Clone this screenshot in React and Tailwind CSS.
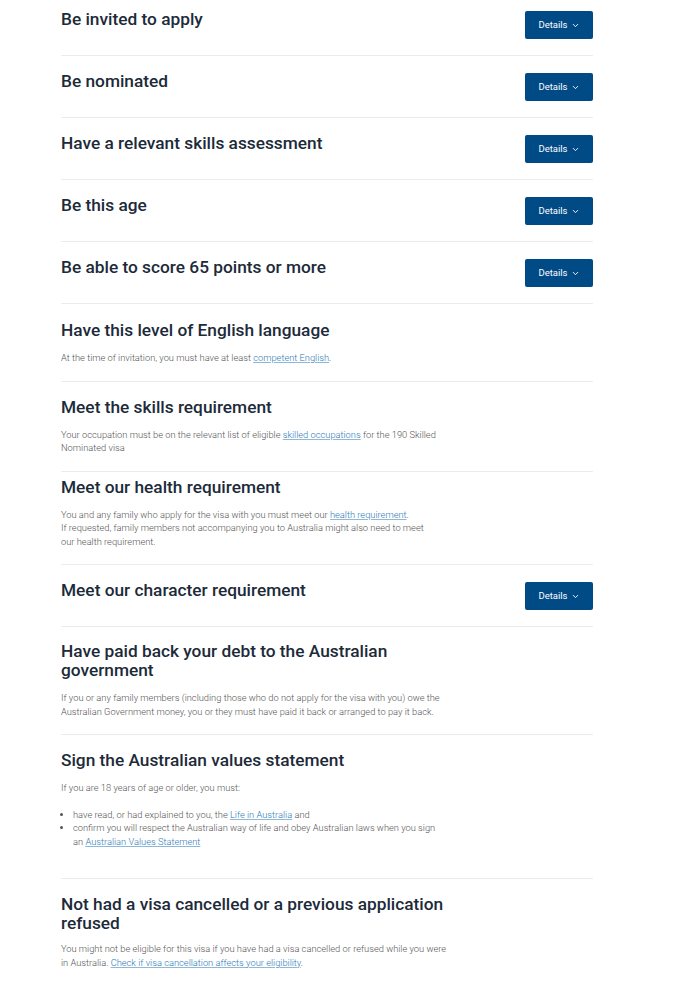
import { ChevronDown } from 'lucide-react'

const linkCls = 'text-[#2b7ab8] underline decoration-[#8db8d9] underline-offset-1'

function DetailsButton() {
    return (
        <button className="mt-px flex h-[28px] w-[68px] shrink-0 items-center justify-center gap-[3px] rounded-[2px] bg-[#004a86] text-[9.5px] font-normal text-white">
            Details
            <ChevronDown size={9} strokeWidth={2.5} />
        </button>
    )
}

function Row({ title, children, button, className = 'pt-4', textWidth = 'w-[380px]' }) {
    return (
        <div className={`flex items-start justify-between border-b border-[#ececec] pb-4 ${className}`}>
            <div className="w-[400px]">
                <h2 className="text-[17.3px] font-medium leading-[19px] text-[#1c2a39]">
                    {title}
                </h2>
                {children && (
                    <div className={`mt-[11px] text-[9.3px] font-light leading-[13.5px] text-[#555] ${textWidth}`}>
                        {children}
                    </div>
                )}
            </div>
            {button && <DetailsButton />}
        </div>
    )
}

export default function App() {
    return (
        <div className="min-h-[982px] bg-white font-['Roboto',sans-serif]">
            <div className="ml-[61px] w-[532px]">
                <Row title="Be invited to apply" button className="pt-[10px]" />
                <Row title="Be nominated" button />
                <Row title="Have a relevant skills assessment" button />
                <Row title="Be this age" button />
                <Row title="Be able to score 65 points or more" button />
                <Row title="Have this level of English language" className="pt-[17px]">
                    <p>
                        At the time of invitation, you must have at least{' '}
                        <a className={linkCls}>competent English</a>.
                    </p>
                </Row>
                <Row title="Meet the skills requirement">
                    <p>
                        Your occupation must be on the relevant list of eligible{' '}
                        <a className={linkCls}>skilled occupations</a> for the 190
                        Skilled Nominated visa
                    </p>
                </Row>
                <Row title="Meet our health requirement" className="pt-[6px]" textWidth="w-[368px]">
                    <p>
                        You and any family who apply for the visa with you must meet
                        our <a className={linkCls}>health requirement</a>.
                    </p>
                    <p>
                        If requested, family members not accompanying you to
                        Australia might also need to meet our health requirement.
                    </p>
                </Row>
                <Row title="Meet our character requirement" button />
                <Row title="Have paid back your debt to the Australian government" className="pt-[15px]">
                    <p>
                        If you or any family members (including those who do not apply
                        for the visa with you) owe the Australian Government money, you
                        or they must have paid it back or arranged to pay it back.
                    </p>
                </Row>
                <Row title="Sign the Australian values statement">
                    <p>If you are 18 years of age or older, you must:</p>
                    <ul className="mt-[13px] mb-[14px] list-disc pl-[12px]">
                        <li>
                            have read, or had explained to you, the{' '}
                            <a className={linkCls}>Life in Australia</a> and
                        </li>
                        <li>
                            confirm you will respect the Australian way of life and obey
                            Australian laws when you sign an{' '}
                            <a className={linkCls}>Australian Values Statement</a>
                        </li>
                    </ul>
                </Row>
                <div className="w-[400px] pt-4">
                    <h2 className="text-[17.3px] font-medium leading-[19px] text-[#1c2a39]">
                        Not had a visa cancelled or a previous application refused
                    </h2>
                    <p className="mt-[9px] w-[386px] text-[9.3px] font-light leading-[13.5px] text-[#555]">
                        You might not be eligible for this visa if you have had a visa
                        cancelled or refused while you were in Australia.{' '}
                        <a className={linkCls}>Check if visa cancellation affects your eligibility</a>.
                    </p>
                </div>
            </div>
        </div>
    )
}
